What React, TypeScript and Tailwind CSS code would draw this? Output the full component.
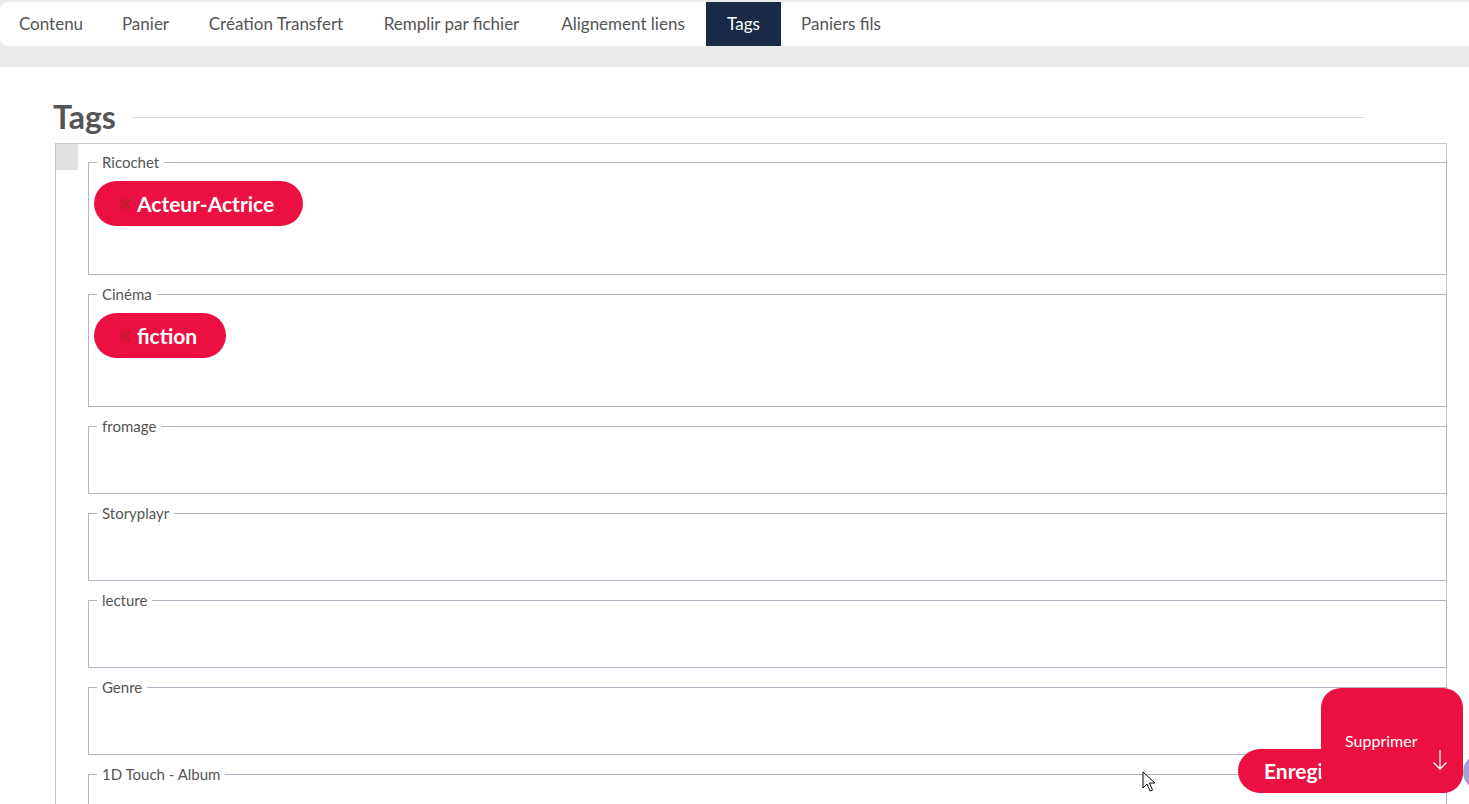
import React from "react";

const tabs = [
  { label: "Contenu", w: "w-[102px]" },
  { label: "Panier", w: "w-[87px]" },
  { label: "Création Transfert", w: "w-[174px]" },
  { label: "Remplir par fichier", w: "w-[177px]" },
  { label: "Alignement liens", w: "w-[166px]" },
  { label: "Tags", w: "w-[75px]", active: true },
  { label: "Paniers fils", w: "w-[120px]" },
];

const groups: { name: string; tags: string[] }[] = [
  { name: "Ricochet", tags: ["Acteur-Actrice"] },
  { name: "Cinéma", tags: ["fiction"] },
  { name: "fromage", tags: [] },
  { name: "Storyplayr", tags: [] },
  { name: "lecture", tags: [] },
  { name: "Genre", tags: [] },
  { name: "1D Touch - Album", tags: [] },
];

function Pill({ label }: { label: string }) {
  return (
    <span className="inline-flex items-center h-[45px] rounded-full bg-[#eb1040] pl-[24px] pr-[29px] text-white font-bold text-[21px] leading-none">
      <svg width="14" height="14" viewBox="0 0 14 14" className="mr-[5px] mt-[1px]">
        <path d="M2 2 L12 12 M12 2 L2 12" stroke="#c91a2f" strokeWidth="3.4" strokeLinecap="butt" />
      </svg>
      {label}
    </span>
  );
}

export default function App() {
  return (
    <div
      className="h-screen w-full overflow-hidden bg-white relative"
      style={{ fontFamily: "Lato, 'Open Sans', sans-serif" }}
    >
      {/* top nav band */}
      <div className="bg-[#ebebeb] pt-[2px] pb-[21px]">
        <nav className="flex h-[44px] bg-white rounded-l-[8px]">
          {tabs.map((t) => (
            <div
              key={t.label}
              className={`${t.w} flex items-center justify-center text-[17px] ${
                t.active ? "bg-[#1b2948] text-white" : "text-[#555555]"
              }`}
            >
              {t.label}
            </div>
          ))}
        </nav>
      </div>

      {/* content */}
      <div className="pt-[30px]">
        <div className="flex items-center h-[40px] ml-[53px] w-[1312px]">
          <h1 className="text-[32px] font-bold text-[#555555] leading-none">Tags</h1>
          <div className="flex-1 ml-[16px] h-px bg-[#dddddd]" />
        </div>

        <div className="mt-[6px] ml-[55px] w-[1392px] border border-[#c9c9c9] flex">
          <div className="w-[22px] h-[26px] bg-[#e0e0e0] shrink-0" />
          <div className="flex-1 ml-[10px] mr-[-1px] pt-[8px] flex flex-col gap-[9px]">
            {groups.map((g) => (
              <fieldset
                key={g.name}
                className="border border-[#b3b5c7] pl-[5px] pt-[9px] pb-[48px]"
              >
                <legend className="ml-[3px] px-[5px] text-[15px] leading-[20px] text-[#555555]">
                  {g.name}
                </legend>
                {g.tags.length > 0 && (
                  <div className="flex gap-2">
                    {g.tags.map((t) => (
                      <Pill key={t} label={t} />
                    ))}
                  </div>
                )}
              </fieldset>
            ))}
          </div>
        </div>
      </div>

      {/* floating buttons */}
      <div className="absolute left-[1238px] top-[749px] w-[225px] h-[44px] rounded-full bg-[#eb1040] flex items-center pl-[26px] text-white font-bold text-[21px]">
        Enregistrer
      </div>
      <div className="absolute left-[1321px] top-[688px] w-[142px] h-[105px] rounded-[20px] bg-[#eb1040] text-white">
        <div className="absolute left-[24px] top-[42px] text-[16px] leading-[22px]">Supprimer</div>
        <svg className="absolute left-[111px] top-[61px]" width="16" height="22" viewBox="0 0 16 22">
          <path d="M8 1 V20 M1.5 13.5 L8 20 L14.5 13.5" stroke="white" strokeWidth="1.3" fill="none" />
        </svg>
      </div>
      <div className="absolute left-[1463px] top-[754px] w-[36px] h-[36px] rounded-full bg-[#a2a5d4]" />

      {/* mouse cursor */}
      <svg className="absolute left-[1142px] top-[771px]" width="14" height="22" viewBox="0 0 14 22">
        <path d="M1 1 V17 L5 13 L8 20 L10.5 19 L7.5 12 L13 12 Z" fill="white" stroke="black" strokeWidth="1" strokeLinejoin="round" />
      </svg>
    </div>
  );
}
